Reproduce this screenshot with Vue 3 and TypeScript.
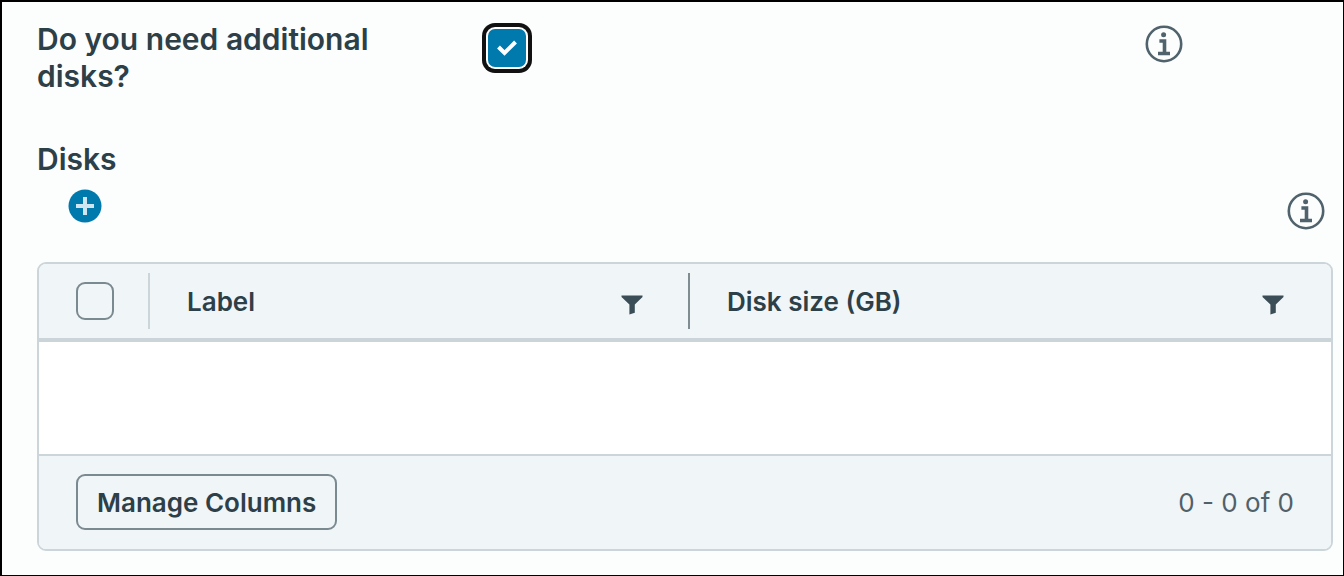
<script setup lang="ts">
import { ref } from 'vue'

const needDisks = ref(true)
const selectAll = ref(false)
const columns: string[] = ['Label', 'Disk size (GB)']
</script>

<template>
  <main class="page">
    <div class="question">
      <label class="field-label" for="need-disks">Do you need additional disks?</label>
      <span class="check-wrap">
        <input id="need-disks" v-model="needDisks" class="check check-main" type="checkbox" />
        <svg v-if="needDisks" class="tick" viewBox="0 0 38 38" aria-hidden="true">
          <path d="M10.5 18 L16.5 24 L27.5 13" />
        </svg>
      </span>
      <button class="icon-button info" type="button" aria-label="About additional disks">
        <svg viewBox="0 0 38 38" aria-hidden="true">
          <circle class="ring" cx="19" cy="19" r="17.2" />
          <circle class="solid" cx="18.6" cy="9.8" r="2.5" />
          <path class="stem" d="M14.4 16 H19.5 V28 M13 28.5 H25" />
        </svg>
      </button>
    </div>

    <section class="disks">
      <h2 class="field-label">Disks</h2>
      <div class="tools">
        <button class="icon-button add" type="button" aria-label="Add disk">
          <svg viewBox="0 0 34 34" aria-hidden="true">
            <circle class="disc" cx="17" cy="17" r="16.5" />
            <path class="plus" d="M8 17 H26 M17 8 V26" />
          </svg>
        </button>
        <button class="icon-button info" type="button" aria-label="About disks">
          <svg viewBox="0 0 38 38" aria-hidden="true">
            <circle class="ring" cx="19" cy="19" r="17.2" />
            <circle class="solid" cx="18.6" cy="9.8" r="2.5" />
            <path class="stem" d="M14.4 16 H19.5 V28 M13 28.5 H25" />
          </svg>
        </button>
      </div>

      <div class="datagrid">
        <table>
          <colgroup>
            <col class="col-select" />
            <col class="col-label" />
            <col />
          </colgroup>
          <thead>
            <tr>
              <th scope="col">
                <div class="cell cell-select">
                  <input v-model="selectAll" class="check" type="checkbox" aria-label="Select all" />
                </div>
              </th>
              <th v-for="name in columns" :key="name" scope="col">
                <div class="cell">
                  <span>{{ name }}</span>
                  <button class="icon-button filter" type="button" :aria-label="`Filter ${name}`">
                    <svg viewBox="0 0 22 20" aria-hidden="true">
                      <path d="M0.5 0.5 H21.5 V2 L13.8 9.5 V17.8 L8.4 19.5 V9.5 L0.5 2 Z" />
                    </svg>
                  </button>
                </div>
              </th>
            </tr>
          </thead>
          <tbody>
            <tr>
              <td colspan="3"></td>
            </tr>
          </tbody>
        </table>
        <footer class="grid-footer">
          <button class="manage" type="button">Manage Columns</button>
          <span class="count">0 - 0 of 0</span>
        </footer>
      </div>
    </section>
  </main>
</template>

<style>
body {
  margin: 0;
}
</style>

<style scoped>
.page {
  box-sizing: border-box;
  min-height: 100vh;
  padding: 19px 10px 23px 35px;
  border: solid #000;
  border-width: 2px 1px 1px 2px;
  background: #fcfefd;
  color: #2d4048;
  font-family: Inter, "Open Sans", sans-serif;
}

.question {
  display: grid;
  grid-template-columns: 451px 1fr auto;
  align-items: start;
  padding-right: 150px;
}

.field-label {
  margin: 0;
  max-width: 360px;
  font-size: 30px;
  font-weight: 600;
  line-height: 37px;
}

.check-wrap {
  position: relative;
  width: 38px;
  height: 38px;
  margin-top: 8px;
}

.check {
  box-sizing: border-box;
  display: block;
  flex: none;
  appearance: none;
  width: 38px;
  height: 38px;
  margin: 0;
  border: 2px solid #7b8a91;
  border-radius: 9px;
  background: transparent;
}

.check-main {
  border-radius: 7px;
  box-shadow: 0 0 0 2px #fff, 0 0 0 6px #111;
}

.check:checked {
  border-color: #0079ad;
  background: #0079ad;
}

.tick {
  position: absolute;
  inset: 0;
  pointer-events: none;
  fill: none;
  stroke: #fff;
  stroke-width: 4;
}

.icon-button {
  flex: none;
  padding: 0;
  border: 0;
  background: transparent;
}

.icon-button svg {
  display: block;
  width: 100%;
  height: 100%;
}

.info {
  width: 38px;
  height: 38px;
}

.question .info {
  margin-top: 4px;
}

.ring {
  fill: none;
  stroke: #50636c;
  stroke-width: 2.6;
}

.solid {
  fill: #50636c;
}

.stem {
  fill: none;
  stroke: #50636c;
  stroke-width: 3.6;
}

.disks {
  margin-top: 46px;
}

.tools {
  display: flex;
  justify-content: space-between;
  align-items: center;
  height: 66px;
  padding: 0 8px 0 31px;
}

.add {
  width: 34px;
  height: 34px;
  margin-bottom: 10px;
}

.disc {
  fill: #0079ad;
}

.plus {
  fill: none;
  stroke: #cfe6f0;
  stroke-width: 4;
}

.datagrid {
  margin-top: 18px;
  overflow: hidden;
  border: 2px solid #ccd5d9;
  border-radius: 9px;
  background: #fff;
}

table {
  width: 100%;
  border-collapse: collapse;
  table-layout: fixed;
}

.col-select {
  width: 111px;
}

.col-label {
  width: 540px;
}

th {
  padding: 9px 0;
  border-bottom: 4px solid #cbd4d8;
  background: #f0f5f8;
  font-size: 26px;
  font-weight: 600;
  text-align: left;
}

.cell {
  display: flex;
  justify-content: space-between;
  align-items: center;
  box-sizing: border-box;
  height: 56px;
  padding: 0 45px 0 37px;
  border-right: 2px solid #7f8c92;
}

.cell-select {
  padding: 0 0 0 37px;
  border-right-color: #ccd5d9;
}

th:last-child .cell {
  border-right-color: transparent;
}

.filter {
  width: 22px;
  height: 20px;
  margin-top: 8px;
}

.filter svg {
  fill: #3b4e57;
}

td {
  height: 112px;
  padding: 0;
}

.grid-footer {
  display: flex;
  justify-content: space-between;
  align-items: center;
  padding: 18px 37px 19px;
  border-top: 2px solid #ccd5d9;
  background: #f0f5f8;
  font-size: 26px;
}

.manage {
  box-sizing: border-box;
  height: 56px;
  padding: 0 19px;
  border: 2px solid #7b8a91;
  border-radius: 9px;
  background: transparent;
  color: inherit;
  font: inherit;
  font-weight: 600;
}

.count {
  color: #50616a;
}
</style>
